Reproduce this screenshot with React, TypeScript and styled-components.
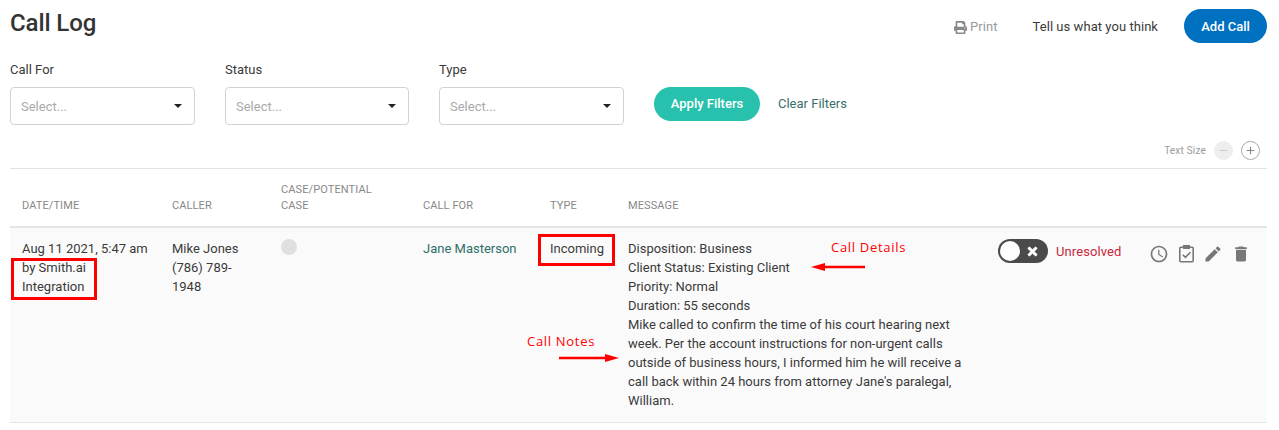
import React from "react";
import styled, { createGlobalStyle } from "styled-components";
import { FaPrint, FaTimes } from "react-icons/fa";
import { MdAccessTime, MdEdit, MdDelete, MdAdd, MdRemove } from "react-icons/md";

const Global = createGlobalStyle`
  html, body { margin: 0; padding: 0; background: #fff; }
  body { font-family: Roboto, "Liberation Sans", sans-serif; color: #333; overflow: hidden; }
  * { box-sizing: border-box; }
`;

const Page = styled.div`
  position: relative;
  width: 1279px;
  height: 430px;
  padding: 0 12px 0 10px;
  overflow: hidden;
`;

const TopBar = styled.header`
  display: flex;
  align-items: flex-start;
  height: 61px;
  padding-top: 9px;
`;

const Title = styled.h1`
  margin: -1px 0 0;
  font-size: 24px;
  line-height: 30px;
  letter-spacing: -0.1px;
  font-weight: 500;
  color: #333;
  flex: 1;
`;

const PrintLink = styled.span`
  display: flex;
  align-items: center;
  gap: 3px;
  margin-top: 10px;
  font-size: 13px;
  line-height: 16px;
  letter-spacing: 0.05px;
  color: #999;
  svg { color: #888; width: 13px; height: 13px; }
`;

const FeedbackLink = styled.span`
  margin: 10px 26px 0 35px;
  font-size: 13px;
  line-height: 16px;
  letter-spacing: 0.05px;
  color: #3a3a3a;
`;

const PillButton = styled.button<{ $bg: string; $w: number; $lift?: boolean }>`
  border: 0;
  width: ${(p) => p.$w}px;
  height: 34px;
  border-radius: 17px;
  background: ${(p) => p.$bg};
  color: #fff;
  font-family: inherit;
  font-size: 13px;
  font-weight: 500;
  padding: 0 0 ${(p) => (p.$lift ? "2px" : "0")};
`;

const Filters = styled.section`
  display: flex;
  height: 64px;
`;

const Field = styled.div<{ $w: number; $mr: number }>`
  width: ${(p) => p.$w}px;
  margin-right: ${(p) => p.$mr}px;
`;

const FieldLabel = styled.div`
  font-size: 13px;
  line-height: 16px;
  color: #3a3a3a;
  height: 26px;
  padding-top: 1px;
`;

const Select = styled.div`
  display: flex;
  align-items: center;
  justify-content: space-between;
  height: 38px;
  padding: 0 12px 0 10px;
  border: 1px solid #d2d2d2;
  border-radius: 4px;
  font-size: 13px;
  color: #aaa;
`;

const Caret = styled.span`
  width: 0;
  height: 0;
  margin-top: -1px;
  border-left: 4.5px solid transparent;
  border-right: 4.5px solid transparent;
  border-top: 4.5px solid #222;
`;

const FilterActions = styled.div`
  display: flex;
  align-items: center;
  padding-top: 26px;
  height: 60px;
`;

const ClearLink = styled.span`
  margin: -2px 0 0 18px;
  font-size: 13px;
  color: #3b6f6b;
`;

const TextSizeBar = styled.div`
  display: flex;
  align-items: center;
  justify-content: flex-end;
  height: 44px;
  padding: 8px 7px 0 0;
  border-bottom: 1px solid #e2e2e2;
  gap: 8px;
`;

const TextSizeLabel = styled.span`
  font-size: 10px;
  letter-spacing: 0.2px;
  color: #999;
`;

const SizeButton = styled.span<{ $off?: boolean }>`
  display: flex;
  align-items: center;
  justify-content: center;
  width: 19px;
  height: 19px;
  border-radius: 50%;
  background: ${(p) => (p.$off ? "#eee" : "#fff")};
  border: 1px solid ${(p) => (p.$off ? "#eee" : "#aaa")};
  color: ${(p) => (p.$off ? "#ccc" : "#888")};
  svg { width: 13px; height: 13px; }
`;

const COLS = "162px 109px 142px 127px 78px 370px 152px 1fr";

const HeadRow = styled.div`
  display: grid;
  grid-template-columns: ${COLS};
  align-items: end;
  height: 59px;
  padding-bottom: 12px;
  border-bottom: 2px solid #e5e5e5;
`;

const HeadCell = styled.div<{ $first?: boolean }>`
  padding-left: ${(p) => (p.$first ? "12px" : "0")};
  font-size: 11px;
  line-height: 16px;
  letter-spacing: 0.1px;
  color: #888;
`;

const DataRow = styled.div`
  display: grid;
  grid-template-columns: ${COLS};
  align-items: start;
  height: 195px;
  padding-top: 11px;
  background: #fafafa;
  border-bottom: 1px solid #e5e5e5;
`;

const Cell = styled.div<{ $first?: boolean; $w?: number; $color?: string }>`
  padding-left: ${(p) => (p.$first ? "12px" : "0")};
  max-width: ${(p) => (p.$w ? `${p.$w}px` : "none")};
  font-size: 13px;
  line-height: 19px;
  color: ${(p) => p.$color ?? "#3a3a3a"};
`;

const CaseDot = styled.div`
  width: 16px;
  height: 16px;
  border-radius: 50%;
  background: #e0e0e0;
`;

const StatusCell = styled.div`
  display: flex;
  align-items: center;
  gap: 8px;
`;

const Toggle = styled.div`
  position: relative;
  display: flex;
  align-items: center;
  justify-content: flex-end;
  width: 50px;
  height: 24px;
  padding-right: 9px;
  border-radius: 12px;
  background: #4a4a4a;
  color: #fff;
  svg { width: 13px; height: 13px; stroke: currentColor; stroke-width: 30; }
`;

const Knob = styled.span`
  position: absolute;
  left: 2px;
  top: 2px;
  width: 20px;
  height: 20px;
  border-radius: 50%;
  background: #fff;
`;

const StatusText = styled.span`
  font-size: 13px;
  letter-spacing: 0.1px;
  color: #c8283c;
`;

const ActionIcons = styled.div`
  display: flex;
  align-items: center;
  gap: 7px;
  margin: 5px 0 0 -1px;
  color: #777;
  svg { width: 20px; height: 20px; display: block; }
  svg:last-child { margin-left: 1px; }
`;

const RedBox = styled.div<{ $x: number; $y: number; $w: number; $h: number }>`
  position: absolute;
  left: ${(p) => p.$x}px;
  top: ${(p) => p.$y}px;
  width: ${(p) => p.$w}px;
  height: ${(p) => p.$h}px;
  border: 3px solid #f00;
`;

const Note = styled.div<{ $x: number; $y: number }>`
  position: absolute;
  left: ${(p) => p.$x}px;
  top: ${(p) => p.$y}px;
  font-family: "Open Sans", sans-serif;
  font-size: 13px;
  line-height: 16px;
  letter-spacing: 0.7px;
  color: #f00;
`;

const ArrowSvg = styled.svg<{ $x: number; $y: number }>`
  position: absolute;
  left: ${(p) => p.$x}px;
  top: ${(p) => p.$y}px;
`;

const filters = [
  { label: "Call For", w: 185, mr: 30 },
  { label: "Status", w: 184, mr: 30 },
  { label: "Type", w: 185, mr: 30 },
];

const ClipboardIcon = () => (
  <svg viewBox="0 0 20 20" fill="none" stroke="currentColor">
    <rect x="3.8" y="3.3" width="13.4" height="14.4" rx="1" strokeWidth="1.6" />
    <rect x="7" y="1" width="7" height="4" fill="currentColor" stroke="none" />
    <path d="M6.8 10.8 L9.4 13.4 L14.4 8.2" strokeWidth="1.6" />
  </svg>
);

export default function App() {
  return (
    <Page>
      <Global />
      <TopBar>
        <Title>Call Log</Title>
        <PrintLink><FaPrint />Print</PrintLink>
        <FeedbackLink>Tell us what you think</FeedbackLink>
        <PillButton $bg="#0071c1" $w={83}>Add Call</PillButton>
      </TopBar>
      <Filters>
        {filters.map((f) => (
          <Field key={f.label} $w={f.w} $mr={f.mr}>
            <FieldLabel>{f.label}</FieldLabel>
            <Select>Select...<Caret /></Select>
          </Field>
        ))}
        <FilterActions>
          <PillButton $bg="#28c1ad" $w={106} $lift>Apply Filters</PillButton>
          <ClearLink>Clear Filters</ClearLink>
        </FilterActions>
      </Filters>
      <TextSizeBar>
        <TextSizeLabel>Text Size</TextSizeLabel>
        <SizeButton $off><MdRemove /></SizeButton>
        <SizeButton><MdAdd /></SizeButton>
      </TextSizeBar>
      <HeadRow>
        <HeadCell $first>DATE/TIME</HeadCell>
        <HeadCell>CALLER</HeadCell>
        <HeadCell>CASE/POTENTIAL<br />CASE</HeadCell>
        <HeadCell>CALL FOR</HeadCell>
        <HeadCell>TYPE</HeadCell>
        <HeadCell>MESSAGE</HeadCell>
        <HeadCell />
        <HeadCell />
      </HeadRow>
      <DataRow>
        <Cell $first>Aug 11 2021, 5:47 am<br />by Smith.ai<br />Integration</Cell>
        <Cell $w={80}>Mike Jones<br />(786) 789-<br />1948</Cell>
        <Cell><CaseDot /></Cell>
        <Cell $color="#2f6f69">Jane Masterson</Cell>
        <Cell>Incoming</Cell>
        <Cell $w={340}>
          Disposition: Business<br />
          Client Status: Existing Client<br />
          Priority: Normal<br />
          Duration: 55 seconds<br />
          Mike called to confirm the time of his court hearing next week. Per the account instructions for non-urgent calls outside of business hours, I informed him he will receive a call back within 24 hours from attorney Jane's paralegal, William.
        </Cell>
        <StatusCell>
          <Toggle><Knob /><FaTimes /></Toggle>
          <StatusText>Unresolved</StatusText>
        </StatusCell>
        <ActionIcons>
          <MdAccessTime />
          <ClipboardIcon />
          <MdEdit />
          <MdDelete />
        </ActionIcons>
      </DataRow>
      <RedBox $x={11} $y={258} $w={86} $h={42} />
      <RedBox $x={538} $y={234} $w={77} $h={32} />
      <Note $x={831} $y={239}>Call Details</Note>
      <Note $x={527} $y={333}>Call Notes</Note>
      <ArrowSvg $x={811} $y={262} width={54} height={10}>
        <path d="M0 5 L14 1 L14 3.8 L54 3.8 L54 6.2 L14 6.2 L14 9 Z" fill="#f00" />
      </ArrowSvg>
      <ArrowSvg $x={559} $y={353} width={60} height={10}>
        <path d="M60 5 L46 1 L46 3.8 L0 3.8 L0 6.2 L46 6.2 L46 9 Z" fill="#f00" />
      </ArrowSvg>
    </Page>
  );
}
